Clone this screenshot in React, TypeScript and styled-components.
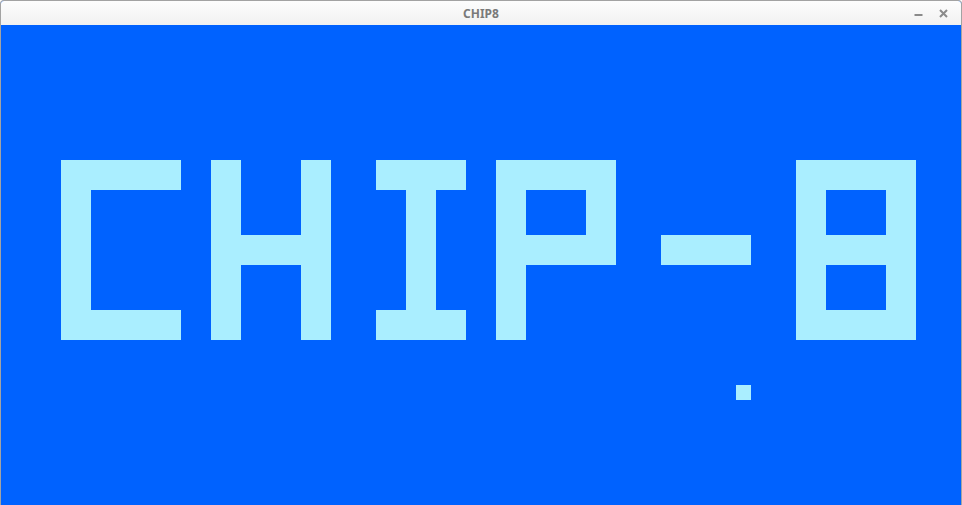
import React from "react";
import styled, { createGlobalStyle } from "styled-components";

const COLS = 64;
const ROWS = 32;
const PX = 15;

const Global = createGlobalStyle`
  html, body { margin: 0; padding: 0; background: #ffffff; }
  body { width: 962px; height: 505px; overflow: hidden; }
`;

const Window = styled.div`
  width: 962px;
  height: 505px;
  box-sizing: border-box;
  display: flex;
  flex-direction: column;
  border: 1px solid #a3a3a3;
  border-bottom: none;
  border-radius: 4px 4px 0 0;
  overflow: hidden;
  background: #0062ff;
`;

const TitleBar = styled.div`
  height: 24px;
  flex: none;
  display: flex;
  align-items: center;
  justify-content: center;
  position: relative;
  background: linear-gradient(#fdfdfd, #f1f1f1);
`;

const Title = styled.span`
  font-family: "Noto Sans", "DejaVu Sans", sans-serif;
  font-weight: 700;
  font-size: 12px;
  color: #7a7a7a;
  margin-top: 1px;
`;

const Controls = styled.div`
  position: absolute;
  right: 13px;
  top: 0;
  height: 24px;
  display: flex;
  align-items: center;
  gap: 16px;
`;

const Screen = styled.div`
  display: grid;
  grid-template-columns: repeat(${COLS}, ${PX}px);
  grid-template-rows: repeat(${ROWS}, ${PX}px);
  background: #0062ff;
`;

const Pixel = styled.div<{ $on: boolean }>`
  background: ${(p) => (p.$on ? "#aaeeff" : "transparent")};
`;

function buildFrame(): boolean[] {
  const fb = new Array(COLS * ROWS).fill(false);
  const fill = (r0: number, r1: number, c0: number, c1: number) => {
    for (let r = r0; r <= r1; r++)
      for (let c = c0; c <= c1; c++) fb[r * COLS + c] = true;
  };
  // C
  fill(9, 10, 4, 11);
  fill(9, 20, 4, 5);
  fill(19, 20, 4, 11);
  // H
  fill(9, 20, 14, 15);
  fill(9, 20, 20, 21);
  fill(14, 15, 14, 21);
  // I
  fill(9, 10, 25, 30);
  fill(9, 20, 27, 28);
  fill(19, 20, 25, 30);
  // P
  fill(9, 20, 33, 34);
  fill(9, 10, 33, 40);
  fill(9, 15, 39, 40);
  fill(14, 15, 33, 40);
  // dash
  fill(14, 15, 44, 49);
  // 8
  fill(9, 10, 53, 60);
  fill(14, 15, 53, 60);
  fill(19, 20, 53, 60);
  fill(9, 20, 53, 54);
  fill(9, 20, 59, 60);
  // dot
  fill(24, 24, 49, 49);
  return fb;
}

const frame = buildFrame();

export default function App() {
  return (
    <>
      <Global />
      <Window>
        <TitleBar>
          <Title>CHIP8</Title>
          <Controls>
            <svg width="9" height="9" viewBox="0 0 9 9">
              <rect x="0.5" y="5" width="8" height="2" fill="#8a8a8a" />
            </svg>
            <svg width="9" height="9" viewBox="0 0 9 9">
              <path d="M1 1 L8 8 M8 1 L1 8" stroke="#8a8a8a" strokeWidth="2" />
            </svg>
          </Controls>
        </TitleBar>
        <Screen>
          {frame.map((on, i) => (
            <Pixel key={i} $on={on} />
          ))}
        </Screen>
      </Window>
    </>
  );
}
